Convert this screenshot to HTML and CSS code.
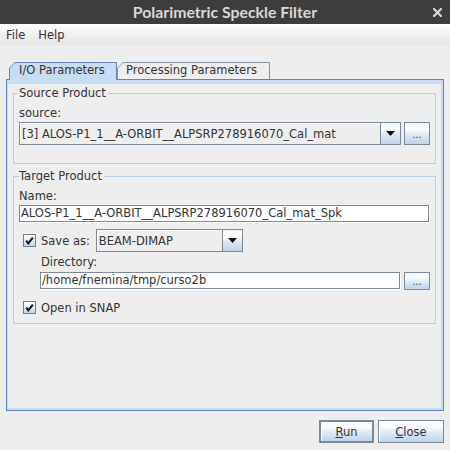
FILE: index.html
```html
<!DOCTYPE html>
<html>
<head>
<meta charset="utf-8">
<link rel="stylesheet" href="styles.css">
</head>
<body>
<div class="titlebar">
  <span class="title">Polarimetric Speckle Filter</span>
  <svg class="close" width="9" height="9" viewBox="0 0 9 9"><path d="M1 1 L8 8 M8 1 L1 8" stroke="#dadada" stroke-width="2.2" stroke-linecap="square"/></svg>
</div>
<div class="menubar"><span>File</span><span>Help</span></div>
<div class="main">
  <div class="tabs">
    <div class="tab sel"><div class="tab-in">I/O Parameters</div></div>
    <div class="tab unsel"><div class="tab-in">Processing Parameters</div></div>
  </div>
  <div class="panel">
    <fieldset class="group source">
      <legend>Source Product</legend>
      <div class="label">source:</div>
      <div class="row">
        <div class="combo grow"><span class="combo-text">[3] ALOS-P1_1__A-ORBIT__ALPSRP278916070_Cal_mat</span><span class="arrow-btn"><svg width="9" height="5" viewBox="0 0 9 5"><polygon points="0,0 9,0 4.5,5" fill="#111"/></svg></span></div>
        <div class="ell tall">...</div>
      </div>
    </fieldset>
    <fieldset class="group target">
      <legend>Target Product</legend>
      <div class="label">Name:</div>
      <div class="field name">ALOS-P1_1__A-ORBIT__ALPSRP278916070_Cal_mat_Spk</div>
      <div class="saverow">
        <span class="check"><svg width="13" height="13" viewBox="0 0 13 13"><path d="M3.2 6.6 L5.3 9.4 L9.8 3.6" fill="none" stroke="#111" stroke-width="2"/></svg></span>
        <span class="cklabel">Save as:</span>
        <div class="combo fmt"><span class="combo-text">BEAM-DIMAP</span><span class="arrow-btn"><svg width="9" height="5" viewBox="0 0 9 5"><polygon points="0,0 9,0 4.5,5" fill="#111"/></svg></span></div>
      </div>
      <div class="label sub">Directory:</div>
      <div class="row dirrow">
        <div class="field grow">/home/fnemina/tmp/curso2b</div>
        <div class="ell">...</div>
      </div>
      <div class="openrow">
        <span class="check"><svg width="13" height="13" viewBox="0 0 13 13"><path d="M3.2 6.6 L5.3 9.4 L9.8 3.6" fill="none" stroke="#111" stroke-width="2"/></svg></span>
        <span class="cklabel">Open in SNAP</span>
      </div>
    </fieldset>
  </div>
  <div class="actions">
    <button class="btn run"><u>R</u>un</button>
    <button class="btn closebtn"><u>C</u>lose</button>
  </div>
</div>
</body>
</html>
```
FILE: styles.css
```css
html, body {
  margin: 0;
  padding: 0;
}
body {
  width: 450px;
  height: 450px;
  overflow: hidden;
  background: #eeeeee;
  font-family: "DejaVu Sans", sans-serif;
  font-size: 11.5px;
  color: #333333;
}
.titlebar {
  height: 24px;
  background: #3d3d3d;
  display: grid;
  grid-template-columns: 1fr auto 1fr;
  align-items: center;
}
.title {
  grid-column: 2;
  font-family: Lato, "Open Sans", sans-serif;
  font-weight: 700;
  font-size: 15.8px;
  color: #d8d8d8;
  line-height: 24px;
}
.close {
  grid-column: 3;
  justify-self: end;
  margin-right: 8px;
}
.menubar {
  height: 21px;
  background: linear-gradient(#fdfdfd, #e4e4e4);
  display: flex;
  align-items: center;
  gap: 13px;
  padding-left: 6px;
  line-height: 14px;
}
.main {
  padding: 17px 6px 0 6px;
}
.tabs {
  display: flex;
  align-items: flex-end;
  height: 17px;
  padding-left: 3px;
}
.tab {
  box-sizing: border-box;
  height: 17px;
  padding: 1px 1px 0 1px;
  background: #8494a3;
  clip-path: polygon(6px 0, 100% 0, 100% 100%, 0 100%, 0 6px);
}
.tab-in {
  height: 100%;
  box-sizing: border-box;
  background: #eeeeee;
  clip-path: polygon(5px 0, 100% 0, 100% 100%, 0 100%, 0 5px);
  padding-left: 8px;
  line-height: 14px;
  white-space: nowrap;
}
.tab.sel {
  width: 108px;
  height: 18px;
  margin-bottom: -1px;
  position: relative;
  z-index: 1;
  background: #6382bf;
}
.tab.sel .tab-in {
  background: #c8ddf2;
  padding-left: 9px;
}
.tab.unsel {
  width: 153px;
}
.panel {
  box-sizing: border-box;
  height: 332px;
  border: 1px solid #6382bf;
  box-shadow: inset 0 4px 0 0 #c8ddf2, inset -2px 0 0 0 #c8ddf2, inset 0 -2px 0 0 #c8ddf2, inset 1px 0 0 0 #c8ddf2;
  padding: 6px 7px 0 6px;
}
.group {
  margin: 0;
  border: 1px solid #b8cfe5;
  padding: 0 5px;
  min-width: 0;
}
.group legend {
  padding: 0 2px 0 0;
  line-height: 14px;
}
.source {
  padding-bottom: 18px;
}
.target {
  margin-top: 5px;
  padding-bottom: 8px;
}
.label {
  margin-top: 6px;
  line-height: 14px;
}
.label.sub {
  margin-top: 3px;
  padding-left: 22px;
}
.row {
  display: flex;
  gap: 3px;
  margin-top: 2px;
}
.grow {
  flex: 1;
  min-width: 0;
}
.combo {
  box-sizing: border-box;
  height: 23px;
  display: flex;
  border: 1px solid #7a8a99;
  background: #eeeeee;
}
.combo-text {
  flex: 1;
  padding-left: 1px;
  line-height: 21px;
  white-space: nowrap;
  overflow: hidden;
  border-top: 1px solid #fff;
  border-left: 1px solid #fff;
  box-sizing: border-box;
}
.arrow-btn {
  width: 19px;
  border-left: 1px solid #7a8a99;
  background: linear-gradient(#f4f8fc, #ffffff 25%, #dae6f2 60%, #c2d4e8);
  display: flex;
  align-items: center;
  justify-content: center;
}
.ell {
  box-sizing: border-box;
  width: 26px;
  height: 18px;
  border: 1px solid #7a8a99;
  background: linear-gradient(#f4f8fc, #ffffff 25%, #dae6f2 60%, #c2d4e8);
  font-size: 10px;
  text-align: center;
  line-height: 18px;
  color: #444;
}
.ell.tall {
  height: 23px;
  line-height: 23px;
}
.field {
  box-sizing: border-box;
  height: 17px;
  border: 1px solid #7a8a99;
  box-shadow: 1px 1px 0 0 #ffffff;
  background: #ffffff;
  padding-left: 1px;
  line-height: 15px;
  white-space: nowrap;
  overflow: hidden;
}
.field.name {
  margin-top: 2px;
  width: 410px;
}
.saverow {
  display: flex;
  align-items: center;
  margin-top: 7px;
  padding-left: 4px;
  height: 23px;
}
.check {
  width: 13px;
  height: 13px;
  box-sizing: border-box;
  border: 1px solid #6e7f90;
  background: linear-gradient(#ffffff, #dae6f2 60%, #c2d4e8);
  display: flex;
}
.check svg {
  margin: -1px;
}
.cklabel {
  margin-left: 5px;
  line-height: 14px;
}
.combo.fmt {
  width: 147px;
  margin-left: 6px;
}
.dirrow {
  margin-top: 3px;
  padding-left: 21px;
  gap: 4px;
}
.openrow {
  display: flex;
  align-items: center;
  height: 15px;
  margin-top: 10px;
  padding-left: 4px;
}
.actions {
  display: flex;
  justify-content: flex-end;
  gap: 4px;
  margin-top: 9px;
}
.btn {
  box-sizing: border-box;
  height: 23px;
  font-family: "DejaVu Sans", sans-serif;
  font-size: 11.5px;
  color: #333333;
  border: 1px solid #7a8a99;
  box-shadow: inset 1px 1px 0 0 #ffffff;
  background: linear-gradient(#f4f8fc, #ffffff 25%, #dae6f2 60%, #c2d4e8);
  padding: 0;
  margin: 0;
}
.btn.run {
  width: 55px;
  border-width: 2px;
}
.btn.closebtn {
  width: 66px;
}
```
